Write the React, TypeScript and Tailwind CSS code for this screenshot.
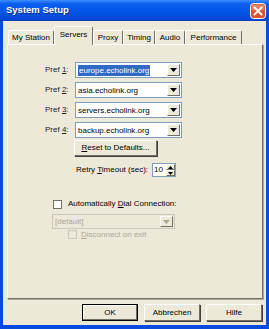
import { useState } from 'react'

const prefs = [
  { n: '1', host: 'europe.echolink.org', selected: true },
  { n: '2', host: 'asia.echolink.org' },
  { n: '3', host: 'servers.echolink.org' },
  { n: '4', host: 'backup.echolink.org' },
]

const tabs = [
  { label: 'My Station', w: 'w-[46px]' },
  { label: 'Servers', w: 'w-[39px]', active: true },
  { label: 'Proxy', w: 'w-[30px]' },
  { label: 'Timing', w: 'w-[32px]' },
  { label: 'Audio', w: 'w-[30px]' },
  { label: 'Performance', w: 'w-[57px]' },
]

function DropArrow({ disabled }: { disabled?: boolean }) {
  return (
    <span className="flex h-full w-[13px] shrink-0 items-center justify-center border border-t-white border-l-white border-r-[#716F64] border-b-[#716F64] bg-[#ECE9D8]">
      <svg width="7" height="4" viewBox="0 0 7 4">
        <path d="M0 0h7L3.5 4z" fill={disabled ? '#ACA899' : '#000'} />
      </svg>
    </span>
  )
}

function Combo({ text, selected }: { text: string; selected?: boolean }) {
  return (
    <div className="flex h-[16px] w-[107px] items-stretch border border-[#7F9DB9] bg-white p-[1px]">
      <div className="flex flex-1 items-center overflow-hidden pl-[1px]">
        <span className={selected ? 'bg-[#316AC5] px-[1px] leading-[11px] text-white' : 'leading-[11px]'}>{text}</span>
      </div>
      <DropArrow />
    </div>
  )
}

function Checkbox({ disabled }: { disabled?: boolean }) {
  return (
    <span
      className={`inline-block h-[9px] w-[9px] shrink-0 border ${
        disabled ? 'border-[#C9C7BA] bg-[#ECE9D8]' : 'border-[#716F64] bg-white'
      }`}
    />
  )
}

function CloseIcon() {
  return (
    <svg width="16" height="16" viewBox="0 0 16 16" className="shrink-0">
      <rect x="0.5" y="0.5" width="15" height="15" rx="3" fill="#D9532B" stroke="#ffffff" />
      <rect x="1.5" y="1.5" width="13" height="6" rx="2" fill="#E8805E" />
      <path d="M4.5 4.5l7 7M11.5 4.5l-7 7" stroke="#ffffff" strokeWidth="1.9" strokeLinecap="square" />
    </svg>
  )
}

export default function App() {
  const [active] = useState('Servers')

  return (
    <div className="flex h-[329px] w-[269px] flex-col bg-[#0A4BDF] font-['Liberation_Sans',Arial,sans-serif] text-[8px] text-black">
      {/* title bar */}
      <div className="flex h-[21px] shrink-0 items-center justify-between bg-[linear-gradient(to_bottom,#3D8DFF_0%,#0A5EF0_18%,#0556E8_55%,#0049D8_85%,#0040C8_100%)] pl-[6px] pr-[3px]">
        <span className="text-[9.5px] font-bold text-white [text-shadow:1px_1px_0_#0A2E8C]">System Setup</span>
        <CloseIcon />
      </div>

      <div className="mx-[3px] mb-[4px] flex flex-1 flex-col bg-[#ECE9D8]">
        {/* tabs */}
        <div className="flex h-[23px] shrink-0 items-end pl-[5px]">
          {tabs.map((t) =>
            t.label === active ? (
              <div
                key={t.label}
                className={`${t.w} relative z-10 -mb-[1px] flex h-[19px] items-center justify-center rounded-t-[2px] border border-b-0 border-t-white border-l-white border-r-[#716F64] bg-[#ECE9D8] pb-[3px]`}
              >
                {t.label}
              </div>
            ) : (
              <div
                key={t.label}
                className={`${t.w} flex h-[14px] items-center justify-center rounded-t-[2px] border border-b-0 border-t-white border-l-white border-r-[#716F64] bg-[#ECE9D8]`}
              >
                {t.label}
              </div>
            ),
          )}
        </div>

        {/* panel */}
        <div className="ml-[4px] mr-[3px] flex h-[255px] flex-col border border-t-white border-l-white border-r-[#716F64] border-b-[#716F64] pl-[37px] pt-[17px] shadow-[1px_1px_0_#ACA899]">
          <div className="flex flex-col gap-[4px]">
            {prefs.map((p) => (
              <div key={p.n} className="flex items-center">
                <span className="w-[30px] text-[#222]">
                  Pref <span className="underline">{p.n}</span>:
                </span>
                <Combo text={p.host} selected={p.selected} />
              </div>
            ))}
          </div>

          <div className="ml-[29px] mt-[2px] flex h-[16px] w-[83px] items-center justify-center border border-t-white border-l-white border-r-[#716F64] border-b-[#716F64] shadow-[1px_1px_0_#404040]">
            <span>
              <span className="underline">R</span>eset to Defaults...
            </span>
          </div>

          <div className="ml-[31px] mt-[7px] flex items-center">
            <span>
              Retry <span className="underline">T</span>imeout (sec):
            </span>
            <div className="ml-[4px] flex h-[14px] w-[24px] items-stretch border border-[#7F9DB9] bg-white">
              <span className="flex-1 pl-[1px] leading-[12px]">10</span>
              <div className="flex w-[9px] flex-col">
                <span className="flex flex-1 items-center justify-center border border-t-white border-l-white border-r-[#716F64] border-b-[#716F64] bg-[#ECE9D8]">
                  <svg width="5" height="3" viewBox="0 0 5 3"><path d="M0 3h5L2.5 0z" fill="#000" /></svg>
                </span>
                <span className="flex flex-1 items-center justify-center border border-t-white border-l-white border-r-[#716F64] border-b-[#716F64] bg-[#ECE9D8]">
                  <svg width="5" height="3" viewBox="0 0 5 3"><path d="M0 0h5L2.5 3z" fill="#000" /></svg>
                </span>
              </div>
            </div>
          </div>

          <div className="ml-[8px] mt-[21px] flex items-center gap-[6px]">
            <Checkbox />
            <span>
              Automatically <span className="underline">D</span>ial Connection:
            </span>
          </div>

          <div className="ml-[7px] mt-[4px] flex h-[15px] w-[123px] items-stretch border border-[#C9C7BA] bg-[#ECE9D8] p-[1px]">
            <span className="flex-1 pl-[1px] leading-[11px] text-[#ACA899]">[default]</span>
            <DropArrow disabled />
          </div>

          <div className="ml-[23px] flex h-[11px] items-center gap-[4px] text-[#ACA899]">
            <Checkbox disabled />
            <span className="leading-[10px]">
              <span className="underline">D</span>isconnect on exit
            </span>
          </div>
        </div>

        {/* buttons */}
        <div className="mt-[5px] flex justify-end gap-[6px] pr-[4px]">
          <div className="flex h-[17px] w-[56px] items-center justify-center border border-black bg-[#ECE9D8] shadow-[inset_-1px_-1px_0_#716F64,inset_1px_1px_0_#fff]">
            OK
          </div>
          <div className="flex h-[17px] w-[56px] items-center justify-center border border-t-white border-l-white border-r-[#716F64] border-b-[#716F64] shadow-[1px_1px_0_#404040]">
            Abbrechen
          </div>
          <div className="flex h-[17px] w-[56px] items-center justify-center border border-t-white border-l-white border-r-[#716F64] border-b-[#716F64] shadow-[1px_1px_0_#404040]">
            Hilfe
          </div>
        </div>
      </div>
    </div>
  )
}
